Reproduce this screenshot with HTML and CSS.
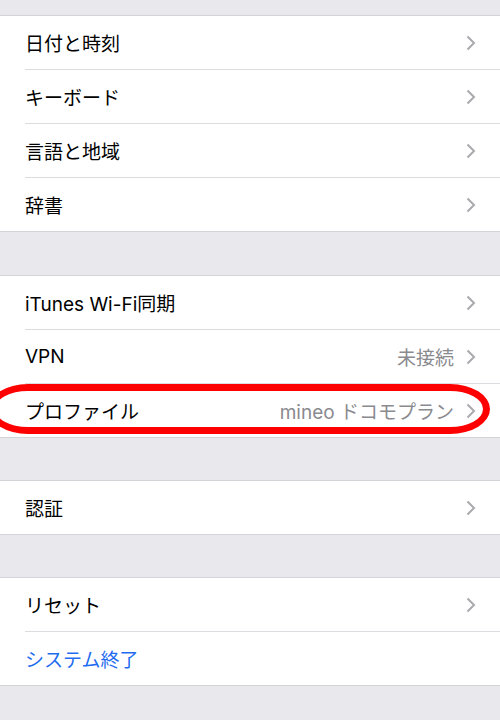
FILE: index.html
```html
<!DOCTYPE html>
<html lang="ja">
<head>
<meta charset="utf-8">
<link rel="stylesheet" href="styles.css">
</head>
<body>
<div class="page">
  <section class="group group-first">
    <div class="row"><span class="label">日付と時刻</span><span class="chev"><svg width="10" height="16" viewBox="0 0 10 16"><polyline points="1.5,1.5 8,8 1.5,14.5" /></svg></span></div>
    <div class="row"><span class="label">キーボード</span><span class="chev"><svg width="10" height="16" viewBox="0 0 10 16"><polyline points="1.5,1.5 8,8 1.5,14.5" /></svg></span></div>
    <div class="row"><span class="label">言語と地域</span><span class="chev"><svg width="10" height="16" viewBox="0 0 10 16"><polyline points="1.5,1.5 8,8 1.5,14.5" /></svg></span></div>
    <div class="row"><span class="label">辞書</span><span class="chev"><svg width="10" height="16" viewBox="0 0 10 16"><polyline points="1.5,1.5 8,8 1.5,14.5" /></svg></span></div>
  </section>
  <section class="group">
    <div class="row"><span class="label">iTunes Wi-Fi同期</span><span class="chev"><svg width="10" height="16" viewBox="0 0 10 16"><polyline points="1.5,1.5 8,8 1.5,14.5" /></svg></span></div>
    <div class="row"><span class="label">VPN</span><span class="value">未接続</span><span class="chev"><svg width="10" height="16" viewBox="0 0 10 16"><polyline points="1.5,1.5 8,8 1.5,14.5" /></svg></span></div>
    <div class="row row-marked"><span class="label">プロファイル</span><span class="value">mineo ドコモプラン</span><span class="chev"><svg width="10" height="16" viewBox="0 0 10 16"><polyline points="1.5,1.5 8,8 1.5,14.5" /></svg></span><span class="mark"></span></div>
  </section>
  <section class="group">
    <div class="row"><span class="label">認証</span><span class="chev"><svg width="10" height="16" viewBox="0 0 10 16"><polyline points="1.5,1.5 8,8 1.5,14.5" /></svg></span></div>
  </section>
  <section class="group">
    <div class="row"><span class="label">リセット</span><span class="chev"><svg width="10" height="16" viewBox="0 0 10 16"><polyline points="1.5,1.5 8,8 1.5,14.5" /></svg></span></div>
    <div class="row"><span class="label link">システム終了</span></div>
  </section>
</div>
</body>
</html>
```

FILE: styles.css
```css
html, body {
  margin: 0;
  padding: 0;
}
body {
  background: #e8e8ed;
  font-family: "Inter", "Noto Sans CJK JP", sans-serif;
  width: 500px;
  height: 720px;
  overflow: hidden;
}
.page {
  padding-top: 15px;
  display: flex;
  flex-direction: column;
  gap: 42px;
}
.group {
  background: #fff;
  border-top: 1px solid #d3d3d8;
  display: flex;
  flex-direction: column;
}
.group-first {
  margin-bottom: 1px;
}
.row {
  position: relative;
  height: 54px;
  box-sizing: border-box;
  margin-left: 25px;
  padding-right: 24px;
  border-bottom: 1px solid #dcdce0;
  display: flex;
  align-items: center;
}
.row:last-child {
  margin-left: 0;
  padding-left: 25px;
  border-bottom-color: #d3d3d8;
}
.label {
  flex: 1;
  font-size: 19px;
  color: #000;
  white-space: nowrap;
}
.link {
  color: #1f6cf0;
}
.value {
  font-size: 19px;
  color: #8a8a8f;
  margin-right: 12px;
  white-space: nowrap;
}
.chev {
  display: flex;
  width: 10px;
  height: 16px;
}
.chev polyline {
  fill: none;
  stroke: #a9a9ae;
  stroke-width: 2;
}
.mark {
  position: absolute;
  left: -12px;
  right: 10px;
  top: 0;
  height: 50px;
  box-sizing: border-box;
  border: 7px solid #ff0000;
  border-radius: 40px / 25px;
  pointer-events: none;
}
```
